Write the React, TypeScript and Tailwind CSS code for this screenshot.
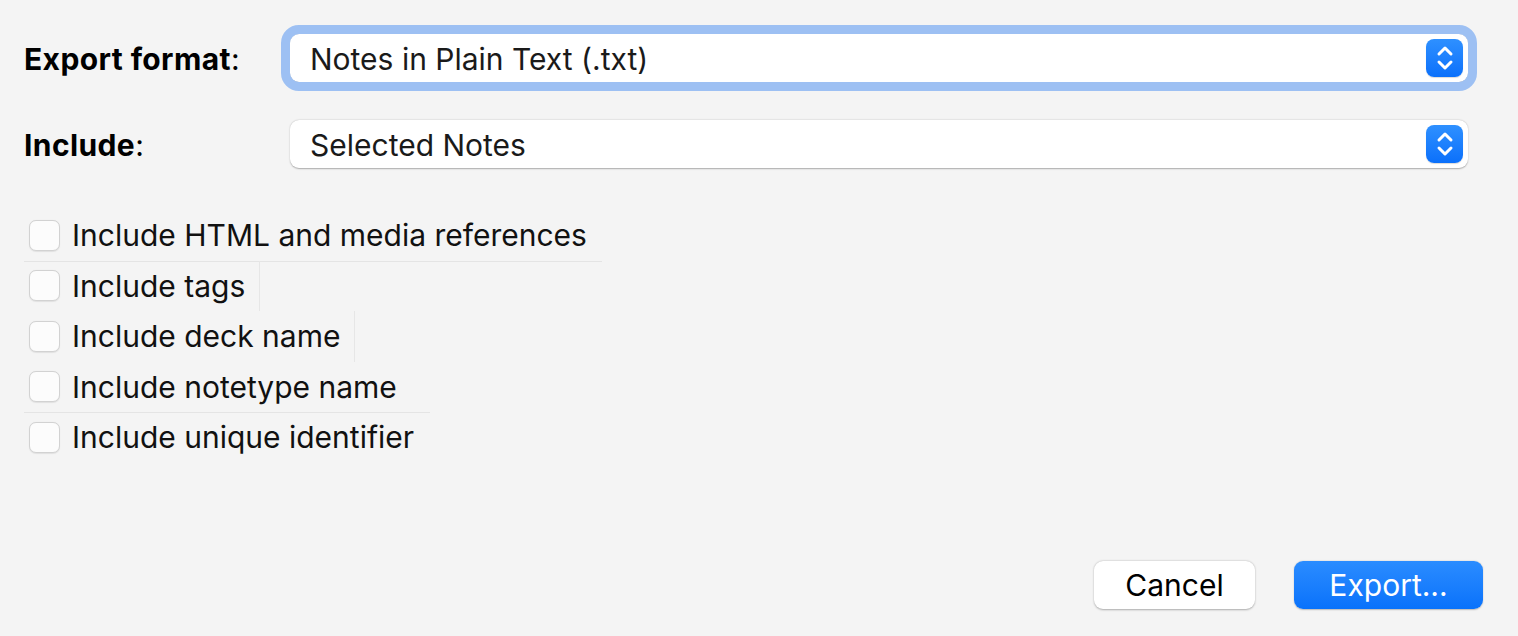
import React from "react";

const font = { fontFamily: '"Inter", "Liberation Sans", sans-serif' };

function Stepper() {
  return (
    <div className="flex h-[38px] w-[37px] items-center justify-center rounded-[8px] bg-gradient-to-b from-[#2e90ff] to-[#0a70fb] shadow-[0_1px_1px_rgba(0,0,0,0.15)]">
      <svg width="20" height="28" viewBox="0 0 20 28" fill="none" stroke="white" strokeWidth="3" strokeLinecap="round" strokeLinejoin="round">
        <path d="M4 10 L10 4 L16 10" />
        <path d="M4 18 L10 24 L16 18" />
      </svg>
    </div>
  );
}

function Select({ value, focused }: { value: string; focused?: boolean }) {
  return (
    <div
      className={
        "flex h-[48px] flex-1 items-center justify-between rounded-[9px] bg-white pl-[20px] pr-[5px] shadow-[0_0.5px_1.5px_rgba(0,0,0,0.3)] " +
        (focused ? "outline-[9px] outline-solid outline-[#9dc0f3] outline-offset-0" : "")
      }
    >
      <span className="pt-[2px] text-[30px] leading-none text-[#1a1a1a]">{value}</span>
      <Stepper />
    </div>
  );
}

function Check({ label, bottomLine, lineWidth, sideLine }: { label: string; bottomLine?: boolean; lineWidth?: string; sideLine?: boolean }) {
  return (
    <div className="relative flex h-[50.5px] items-center">
      <div className="ml-[5px] h-[31px] w-[31px] rounded-[7px] border border-[#d2d2d2] bg-[#fcfcfc] shadow-[0_0.5px_1px_rgba(0,0,0,0.08)]" />
      <span className={"ml-[12px] pr-[14px] text-[30px] leading-none text-[#111] " + (sideLine ? "self-stretch flex items-center border-r border-[#e6e6e6]" : "")}>{label}</span>
      {bottomLine && <div className={"absolute bottom-[-1px] left-0 h-px bg-[#e4e4e4] " + lineWidth} />}
    </div>
  );
}

export default function App() {
  return (
    <div style={font} className="flex h-[636px] w-[1518px] flex-col bg-[#f4f4f4] text-black">
      <div className="flex flex-col gap-[38px] pl-[24px] pr-[50px] pt-[34px]">
        <div className="flex items-center">
          <div className="w-[266px] pt-[2px] text-[30px] leading-none">
            <span className="font-bold tracking-[0.4px]">Export format</span>:
          </div>
          <Select value="Notes in Plain Text (.txt)" focused />
        </div>
        <div className="flex items-center">
          <div className="w-[266px] pt-[2px] text-[30px] leading-none">
            <span className="font-bold tracking-[0.4px]">Include</span>:
          </div>
          <Select value="Selected Notes" />
        </div>
      </div>

      <div className="mt-[42px] flex flex-col pl-[24px]">
        <Check label="Include HTML and media references" bottomLine lineWidth="w-[578px]" />
        <Check label="Include tags" sideLine />
        <Check label="Include deck name" sideLine />
        <Check label="Include notetype name" bottomLine lineWidth="w-[406px]" />
        <Check label="Include unique identifier" />
      </div>

      <div className="mt-auto flex justify-end gap-[39px] pb-[27px] pr-[35px]">
        <button className="h-[48px] w-[161px] rounded-[9px] bg-white text-[30px] text-black shadow-[0_0.5px_2px_rgba(0,0,0,0.3)]">
          Cancel
        </button>
        <button className="h-[48px] w-[189px] rounded-[9px] bg-gradient-to-b from-[#2a8cff] to-[#0872fb] text-[30px] text-white shadow-[0_0.5px_1.5px_rgba(0,0,0,0.25)]">
          Export...
        </button>
      </div>
    </div>
  );
}
